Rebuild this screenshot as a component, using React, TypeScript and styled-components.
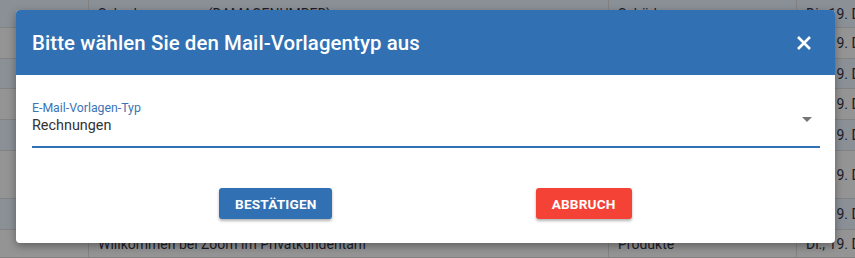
import React from 'react';
import styled, { createGlobalStyle } from 'styled-components';

const GlobalStyle = createGlobalStyle`
  html, body {
    margin: 0;
    padding: 0;
    width: 855px;
    height: 258px;
    overflow: hidden;
    font-family: Roboto, "Liberation Sans", Arial, sans-serif;
  }
`;

const Page = styled.div`
  position: relative;
  width: 855px;
  height: 258px;
  overflow: hidden;
`;

const Table = styled.div`
  display: flex;
  flex-direction: column;
`;

const Row = styled.div<{ $tinted: boolean; $height: number }>`
  display: grid;
  grid-template-columns: 88px 520px 188px 1fr;
  height: ${p => p.$height}px;
  background: ${p => (p.$tinted ? '#8b9097' : '#949494')};
  border-bottom: 1px solid #828282;
  box-sizing: border-box;
  color: #1c1c2a;
  font-size: 14px;
`;

const Cell = styled.div`
  display: flex;
  align-items: center;
  padding-left: 9px;
  border-left: 1px solid #828282;
  white-space: nowrap;
  overflow: hidden;
  &:first-child {
    border-left: none;
  }
`;

const Dialog = styled.div`
  position: absolute;
  left: 16px;
  top: 10px;
  width: 819px;
  height: 233px;
  background: #fff;
  border-radius: 4px;
  overflow: hidden;
  box-shadow: 0 3px 8px rgba(0, 0, 0, 0.35);
  display: flex;
  flex-direction: column;
`;

const Header = styled.div`
  height: 65px;
  background: #3170b3;
  display: flex;
  align-items: center;
  justify-content: space-between;
  padding: 0 23px 0 16px;
  box-sizing: border-box;
  color: #fff;
`;

const Title = styled.h2`
  margin: 0;
  font-size: 20.4px;
  font-weight: 500;
  letter-spacing: 0.1px;
`;

const CloseButton = styled.button`
  border: none;
  background: none;
  padding: 0;
  display: flex;
  color: #fff;
  cursor: pointer;
`;

const Body = styled.div`
  padding-top: 26px;
`;

const Field = styled.div`
  position: relative;
  margin: 0 15px 0 16px;
  border-bottom: 2px solid #3170b3;
  padding-bottom: 9px;
`;

const Label = styled.div`
  font-size: 12.3px;
  color: #3a74b6;
  line-height: 14px;
`;

const Value = styled.div`
  font-size: 14.4px;
  color: #333;
  line-height: 22px;
`;

const Arrow = styled.span`
  position: absolute;
  right: 8px;
  top: 16px;
  width: 0;
  height: 0;
  border-left: 5px solid transparent;
  border-right: 5px solid transparent;
  border-top: 5px solid #767676;
`;

const Actions = styled.div`
  display: flex;
  justify-content: space-evenly;
  margin-top: 40px;
`;

const Button = styled.button<{ $color: string; $width: number }>`
  width: ${p => p.$width}px;
  height: 31px;
  border: none;
  border-radius: 3px;
  background: ${p => p.$color};
  color: #fff;
  font-family: Roboto, "Liberation Sans", Arial, sans-serif;
  font-size: 13.6px;
  font-weight: 700;
  letter-spacing: 0.2px;
  box-shadow: 0 2px 3px rgba(0, 0, 0, 0.3);
  cursor: pointer;
`;

const rows: { h: number; cells: string[] }[] = [
  { h: 28, cells: ['', 'Schadennummer (DAMAGENUMBER)', 'Schäden', 'Di., 19. D'] },
  { h: 31, cells: ['', '', '', 'Di., 19. D'] },
  { h: 30, cells: ['', '', '', 'Di., 19. D'] },
  { h: 31, cells: ['', '', '', 'Di., 19. D'] },
  { h: 31, cells: ['', '', '', 'Di., 19. D'] },
  { h: 48, cells: ['', '', '', 'Di., 19. D'] },
  { h: 31, cells: ['', '', '', 'Di., 19. D'] },
  { h: 28, cells: ['', 'Willkommen bei Zoom im Privatkundentarif', 'Produkte', 'Di., 19. D'] },
];

export default function App() {
  return (
    <Page>
      <GlobalStyle />
      <Table>
        {rows.map((r, i) => (
          <Row key={i} $tinted={i % 2 === 0} $height={r.h}>
            {r.cells.map((c, j) => (
              <Cell key={j}>{c}</Cell>
            ))}
          </Row>
        ))}
      </Table>
      <Dialog>
        <Header>
          <Title>Bitte wählen Sie den Mail-Vorlagentyp aus</Title>
          <CloseButton aria-label="Schließen">
            <svg width="16" height="16" viewBox="0 0 16 16">
              <path d="M2 2 L14 14 M14 2 L2 14" stroke="#fff" strokeWidth="2.6" />
            </svg>
          </CloseButton>
        </Header>
        <Body>
          <Field>
            <Label>E-Mail-Vorlagen-Typ</Label>
            <Value>Rechnungen</Value>
            <Arrow />
          </Field>
          <Actions>
            <Button $color="#3170b3" $width={113}>BESTÄTIGEN</Button>
            <Button $color="#f44336" $width={96}>ABBRUCH</Button>
          </Actions>
        </Body>
      </Dialog>
    </Page>
  );
}
